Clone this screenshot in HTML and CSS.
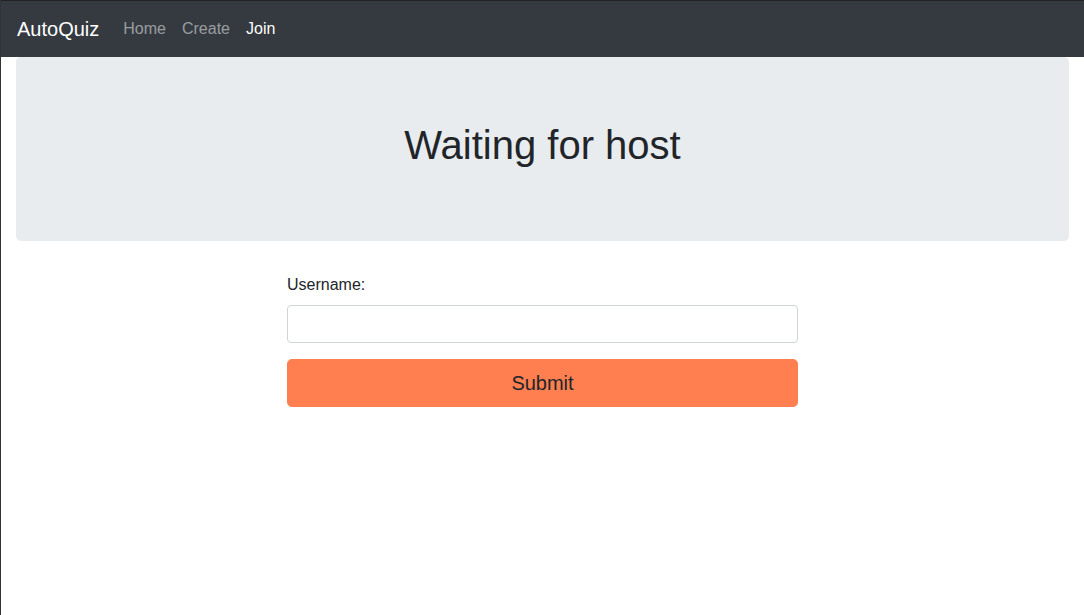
FILE: index.html
```html
<!DOCTYPE html>
<html lang="en">
<head>
<meta charset="utf-8">
<title>AutoQuiz</title>
<link rel="stylesheet" href="styles.css">
</head>
<body>
<nav class="navbar">
  <a class="brand" href="#">AutoQuiz</a>
  <ul class="nav">
    <li><a class="nav-link" href="#">Home</a></li>
    <li><a class="nav-link" href="#">Create</a></li>
    <li><a class="nav-link active" href="#">Join</a></li>
  </ul>
</nav>
<main class="container">
  <section class="jumbotron">
    <h1>Waiting for host</h1>
  </section>
  <form class="join-form">
    <div class="form-group">
      <label for="username">Username:</label>
      <input id="username" class="form-control" type="text">
    </div>
    <button type="button" class="btn-submit">Submit</button>
  </form>
</main>
</body>
</html>
```
FILE: styles.css
```css
* { box-sizing: border-box; }
html, body { height: 100%; }
body {
  margin: 0;
  border-left: 1px solid #2f3439;
  font-family: "Liberation Sans", Arial, sans-serif;
  font-size: 16px;
  line-height: 1.5;
  color: #212529;
  background: #fff;
}
.navbar {
  display: flex;
  align-items: center;
  height: 57px;
  padding: 0 16px;
  background: #343a40;
  border-top: 1px solid #222;
}
.brand {
  font-size: 20px;
  line-height: 30px;
  color: #fff;
  text-decoration: none;
  margin-right: 16px;
}
.nav {
  display: flex;
  list-style: none;
  margin: 0;
  padding: 0;
}
.nav-link {
  display: block;
  padding: 8px;
  color: rgba(255,255,255,.5);
  text-decoration: none;
}
.nav-link.active { color: #fff; }
.container { padding: 0 15px; }
.jumbotron {
  background: #e9ecef;
  border-radius: 4.8px;
  padding: 64px 32px;
  margin-bottom: 32px;
  text-align: center;
}
.jumbotron h1 {
  margin: 0 0 8px;
  font-size: 40px;
  font-weight: 500;
  line-height: 1.2;
}
.join-form {
  width: 511px;
  margin: 0 auto;
}
.form-group { margin-bottom: 16px; }
label {
  display: block;
  margin-bottom: 8px;
}
.form-control {
  display: block;
  width: 100%;
  height: 38px;
  padding: 6px 12px;
  font: inherit;
  border: 1px solid #ced4da;
  border-radius: 4px;
}
.btn-submit {
  display: block;
  width: 100%;
  height: 48px;
  padding: 8px 16px;
  font-family: inherit;
  font-size: 20px;
  line-height: 1.5;
  color: #212529;
  background: #ff7f50;
  border: 1px solid #ff7f50;
  border-radius: 4.8px;
}
```
